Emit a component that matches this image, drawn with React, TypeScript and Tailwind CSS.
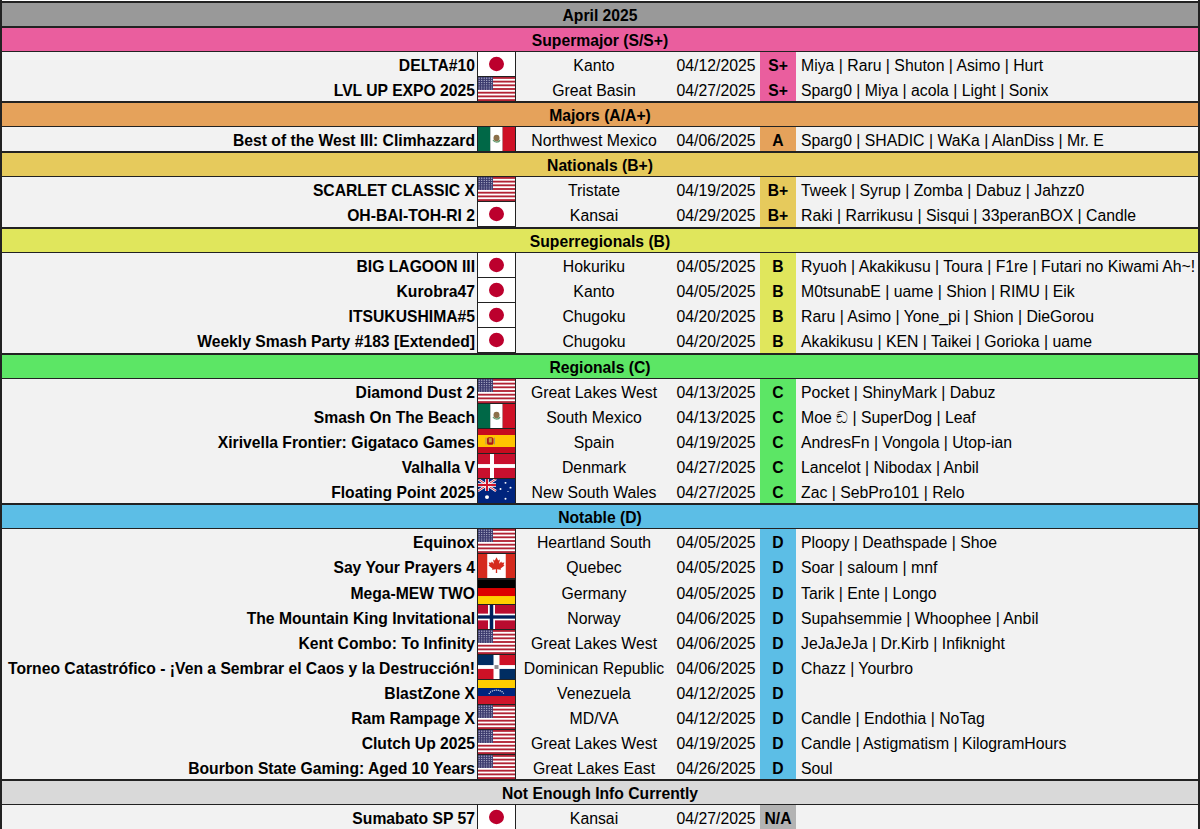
const Stripes = () => (
  <>
    <rect width="37" height="25" fill="#fff" />
    {[0, 2, 4, 6, 8, 10, 12].map((i) => (
      <rect key={i} y={(i * 25) / 13} width="37" height={25 / 13} fill="#b22234" />
    ))}
    <rect width="15" height="13.5" fill="#3c3b6e" />
    {[1.2, 3.5, 5.8, 8.1, 10.4, 12.5].map((y) =>
      [1.2, 3.7, 6.2, 8.7, 11.2, 13.7].map((x) => (
        <circle key={`${x}-${y}`} cx={x} cy={y} r="0.6" fill="#c9cbe0" />
      )),
    )}
  </>
);

const FLAGS: Record<string, React.ReactNode> = {
  us: <Stripes />,
  jp: (
    <>
      <rect width="37" height="25" fill="#fff" />
      <circle cx="18.5" cy="12.5" r="7.5" fill="#bc002d" />
    </>
  ),
  mx: (
    <>
      <rect width="12.3" height="25" fill="#006847" />
      <rect x="12.3" width="12.4" height="25" fill="#fff" />
      <rect x="24.7" width="12.3" height="25" fill="#ce1126" />
      <ellipse cx="18.5" cy="11.5" rx="3" ry="3.5" fill="#8c6f4a" />
      <path d="M15 13.5c1.5 3 6 3 7 0" stroke="#5f9a6e" strokeWidth="1.2" fill="none" />
    </>
  ),
  es: (
    <>
      <rect width="37" height="25" fill="#c60b1e" />
      <rect y="6.25" width="37" height="12.5" fill="#ffc400" />
      <rect x="9" y="8.5" width="6.5" height="8" rx="2" fill="#ad1519" />
      <rect x="10.8" y="9.5" width="3" height="4.5" fill="#c8a03c" />
      <path d="M8 9v7M16.5 9v7" stroke="#a9906a" strokeWidth="1" />
    </>
  ),
  dk: (
    <>
      <rect width="37" height="25" fill="#c8102e" />
      <rect x="12" width="4" height="25" fill="#fff" />
      <rect y="10.5" width="37" height="4" fill="#fff" />
    </>
  ),
  au: (
    <>
      <rect width="37" height="25" fill="#00247d" />
      <path d="M0 0l18 12.5M18 0L0 12.5" stroke="#fff" strokeWidth="2.4" />
      <path d="M0 0l18 12.5M18 0L0 12.5" stroke="#cf142b" strokeWidth="0.9" />
      <path d="M9 0v12.5M0 6.25h18" stroke="#fff" strokeWidth="3.6" />
      <path d="M9 0v12.5M0 6.25h18" stroke="#cf142b" strokeWidth="2" />
      <circle cx="9" cy="18.8" r="2" fill="#fff" />
      <circle cx="27.5" cy="4" r="1" fill="#fff" />
      <circle cx="27.5" cy="20.5" r="1" fill="#fff" />
      <circle cx="22.5" cy="10.5" r="1" fill="#fff" />
      <circle cx="32.5" cy="9" r="1" fill="#fff" />
      <circle cx="30" cy="13" r="0.6" fill="#fff" />
    </>
  ),
  ca: (
    <>
      <rect width="37" height="25" fill="#d52b1e" />
      <rect x="9.25" width="18.5" height="25" fill="#fff" />
      <path
        d="M18.5 3.5l1.7 3.2 1.7-.9-.8 4.3 2.2-2.2.5 1.3 2.5-.4-.8 2.6 1 .6-3.9 3.2.4 1.3-3.9-.5.1 3.9h-1.4l.1-3.9-3.9.5.4-1.3-3.9-3.2 1-.6-.8-2.6 2.5.4.5-1.3 2.2 2.2-.8-4.3 1.7.9z"
        fill="#d52b1e"
      />
    </>
  ),
  de: (
    <>
      <rect width="37" height="8.4" fill="#000" />
      <rect y="8.4" width="37" height="8.3" fill="#dd0000" />
      <rect y="16.7" width="37" height="8.3" fill="#ffce00" />
    </>
  ),
  no: (
    <>
      <rect width="37" height="25" fill="#ba0c2f" />
      <rect x="10" width="7" height="25" fill="#fff" />
      <rect y="9" width="37" height="7" fill="#fff" />
      <rect x="11.75" width="3.5" height="25" fill="#00205b" />
      <rect y="10.75" width="37" height="3.5" fill="#00205b" />
    </>
  ),
  do: (
    <>
      <rect width="37" height="25" fill="#fff" />
      <rect width="15.5" height="10.5" fill="#002d62" />
      <rect x="21.5" width="15.5" height="10.5" fill="#ce1126" />
      <rect y="14.5" width="15.5" height="10.5" fill="#ce1126" />
      <rect x="21.5" y="14.5" width="15.5" height="10.5" fill="#002d62" />
      <rect x="16.5" y="10.5" width="4" height="4" fill="#8d8a8f" />
    </>
  ),
  ve: (
    <>
      <rect width="37" height="8.4" fill="#ffcd00" />
      <rect y="8.4" width="37" height="8.3" fill="#00247d" />
      <rect y="16.7" width="37" height="8.3" fill="#cf142b" />
      <path d="M11 14.5a8 6 0 0 1 15 0" stroke="#fff" strokeWidth="1.2" strokeDasharray="1 1" fill="none" />
    </>
  ),
};

const Flag = ({ code }: { code: string }) => (
  <svg viewBox="0 0 37 25" preserveAspectRatio="none" className="block h-[24px] w-[37px]">
    {FLAGS[code]}
  </svg>
);

type Row = [string, string, string, string, string];

const SECTIONS: { title: string; bg: string; tierBg?: string; tier: string; rows: Row[] }[] = [
  {
    title: "Supermajor (S/S+)",
    bg: "bg-[#ea5e9e]",
    tier: "S+",
    rows: [
      ["DELTA#10", "jp", "Kanto", "04/12/2025", "Miya | Raru | Shuton | Asimo | Hurt"],
      ["LVL UP EXPO 2025", "us", "Great Basin", "04/27/2025", "Sparg0 | Miya | acola | Light | Sonix"],
    ],
  },
  {
    title: "Majors (A/A+)",
    bg: "bg-[#e5a25b]",
    tier: "A",
    rows: [
      ["Best of the West III: Climhazzard", "mx", "Northwest Mexico", "04/06/2025", "Sparg0 | SHADIC | WaKa | AlanDiss | Mr. E"],
    ],
  },
  {
    title: "Nationals (B+)",
    bg: "bg-[#e6ca5c]",
    tier: "B+",
    rows: [
      ["SCARLET CLASSIC X", "us", "Tristate", "04/19/2025", "Tweek | Syrup | Zomba | Dabuz | Jahzz0"],
      ["OH-BAI-TOH-RI 2", "jp", "Kansai", "04/29/2025", "Raki | Rarrikusu | Sisqui | 33peranBOX | Candle"],
    ],
  },
  {
    title: "Superregionals (B)",
    bg: "bg-[#e0e65c]",
    tier: "B",
    rows: [
      ["BIG LAGOON III", "jp", "Hokuriku", "04/05/2025", "Ryuoh | Akakikusu | Toura | F1re | Futari no Kiwami Ah~!"],
      ["Kurobra47", "jp", "Kanto", "04/05/2025", "M0tsunabE | uame | Shion | RIMU | Eik"],
      ["ITSUKUSHIMA#5", "jp", "Chugoku", "04/20/2025", "Raru | Asimo | Yone_pi | Shion | DieGorou"],
      ["Weekly Smash Party #183 [Extended]", "jp", "Chugoku", "04/20/2025", "Akakikusu | KEN | Taikei | Gorioka | uame"],
    ],
  },
  {
    title: "Regionals (C)",
    bg: "bg-[#5ce665]",
    tier: "C",
    rows: [
      ["Diamond Dust 2", "us", "Great Lakes West", "04/13/2025", "Pocket | ShinyMark | Dabuz"],
      ["Smash On The Beach", "mx", "South Mexico", "04/13/2025", "Moe ඞ | SuperDog | Leaf"],
      ["Xirivella Frontier: Gigataco Games", "es", "Spain", "04/19/2025", "AndresFn | Vongola | Utop-ian"],
      ["Valhalla V", "dk", "Denmark", "04/27/2025", "Lancelot | Nibodax | Anbil"],
      ["Floating Point 2025", "au", "New South Wales", "04/27/2025", "Zac | SebPro101 | Relo"],
    ],
  },
  {
    title: "Notable (D)",
    bg: "bg-[#5cbee6]",
    tier: "D",
    rows: [
      ["Equinox", "us", "Heartland South", "04/05/2025", "Ploopy | Deathspade | Shoe"],
      ["Say Your Prayers 4", "ca", "Quebec", "04/05/2025", "Soar | saloum | mnf"],
      ["Mega-MEW TWO", "de", "Germany", "04/05/2025", "Tarik | Ente | Longo"],
      ["The Mountain King Invitational", "no", "Norway", "04/06/2025", "Supahsemmie | Whoophee | Anbil"],
      ["Kent Combo: To Infinity", "us", "Great Lakes West", "04/06/2025", "JeJaJeJa | Dr.Kirb | Infiknight"],
      ["Torneo Catastrófico - ¡Ven a Sembrar el Caos y la Destrucción!", "do", "Dominican Republic", "04/06/2025", "Chazz | Yourbro"],
      ["BlastZone X", "ve", "Venezuela", "04/12/2025", ""],
      ["Ram Rampage X", "us", "MD/VA", "04/12/2025", "Candle | Endothia | NoTag"],
      ["Clutch Up 2025", "us", "Great Lakes West", "04/19/2025", "Candle | Astigmatism | KilogramHours"],
      ["Bourbon State Gaming: Aged 10 Years", "us", "Great Lakes East", "04/26/2025", "Soul"],
    ],
  },
  {
    title: "Not Enough Info Currently",
    bg: "bg-[#d9d9d9]",
    tierBg: "bg-[#b3b3b3]",
    tier: "N/A",
    rows: [["Sumabato SP 57", "jp", "Kansai", "04/27/2025", ""]],
  },
];

// rows that sit one pixel taller in the picture
const TALL = ["OH-BAI-TOH-RI 2", "Weekly Smash Party #183 [Extended]", "Say Your Prayers 4"];

const Band = ({ title, bg }: { title: string; bg: string }) => (
  <div
    className={`relative flex h-[25px] items-center justify-center border-y border-[#222] pt-[2px] text-center text-[15.7px] font-bold shadow-[0_-1px_0_#222] ${bg}`}
  >
    {title}
  </div>
);

export default function App() {
  return (
    <div className="h-[829px] w-[1200px] overflow-hidden border-x-2 border-[#222] bg-white pt-[2px] font-['Liberation_Sans',Arial,sans-serif] text-[15.8px] leading-[18px] text-black">
      <Band title="April 2025" bg="bg-[#999999]" />
      {SECTIONS.map((s) => (
        <div key={s.title}>
          <Band title={s.title} bg={s.bg} />
          {s.rows.map((r) => (
            <div
              key={r[0]}
              className={`flex items-center bg-[#f2f2f2] ${TALL.includes(r[0]) ? "h-[26px]" : "h-[25px]"}`}
            >
              <div className="w-[475px] whitespace-nowrap pr-[2px] pt-[2px] text-right text-[15.7px] font-bold">{r[0]}</div>
              <div className="h-full w-[39px] shrink-0 border-x border-[#222] bg-[#222]">
                <Flag code={r[1]} />
              </div>
              <div className="w-[156px] pt-[2px] text-center">{r[2]}</div>
              <div className="w-[88px] pt-[2px] text-center">{r[3]}</div>
              <div className={`flex h-full w-[36px] items-center justify-center pt-[2px] text-[15.7px] font-bold ${s.tierBg ?? s.bg}`}>
                {s.tier}
              </div>
              <div className="flex-1 whitespace-nowrap pl-[5px] pt-[2px]">{r[4]}</div>
            </div>
          ))}
        </div>
      ))}
    </div>
  );
}
